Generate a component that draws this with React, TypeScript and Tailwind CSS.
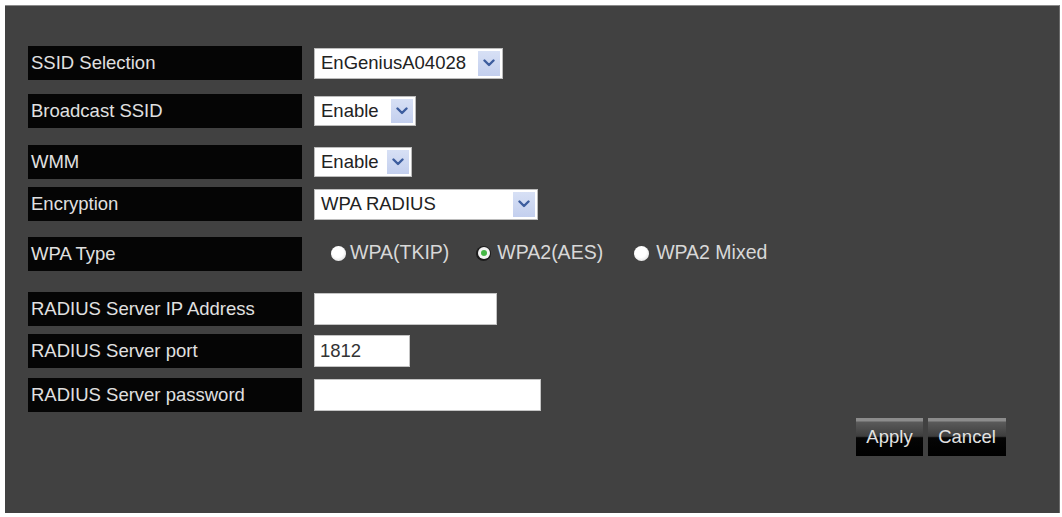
import React from "react";

const font = { fontFamily: '"Liberation Sans", Arial, sans-serif' };

function Label({ text }: { text: string }) {
  return (
    <div className="w-[274px] h-[34px] bg-[#050505] flex items-center pl-[3px] text-[18.5px] text-[#e0e0e0] leading-none shrink-0">
      {text}
    </div>
  );
}

function Arrow() {
  return (
    <div className="absolute right-[2px] top-[2px] bottom-[2px] w-[22px] bg-[linear-gradient(to_bottom,#d7e0f5,#c3cfee)] flex items-center justify-center">
      <svg width="12" height="8" viewBox="0 0 12 8">
        <path d="M1.5 1.5 L6 6 L10.5 1.5" fill="none" stroke="#3d5d9e" strokeWidth="2.4" strokeLinecap="round" strokeLinejoin="round" />
      </svg>
    </div>
  );
}

function Select({ value, w, h = 31 }: { value: string; w: string; h?: number }) {
  return (
    <div
      className={`relative ${w} bg-white border border-[#bcbcbc] flex items-center pl-[6px] text-[18.5px] text-[#222] leading-none`}
      style={{ height: h }}
    >
      {value}
      <Arrow />
    </div>
  );
}

function Input({ value, w }: { value?: string; w: string }) {
  return (
    <div className={`${w} h-[32px] bg-white border border-[#c4c4c4] flex items-center pl-[5px] text-[18.5px] text-[#333] leading-none`}>
      {value}
    </div>
  );
}

function Radio({ checked }: { checked?: boolean }) {
  if (checked) {
    return (
      <span className="w-[15px] h-[15px] rounded-full bg-[#1c1c1c] flex items-center justify-center shrink-0">
        <span className="w-[12px] h-[12px] rounded-full bg-[#f4f4f4] flex items-center justify-center">
          <span className="w-[6px] h-[6px] rounded-full bg-[#46b846]" />
        </span>
      </span>
    );
  }
  return (
    <span className="block w-[15px] h-[15px] rounded-full bg-[radial-gradient(circle_at_45%_40%,#ffffff_45%,#cfcfcf_100%)] shrink-0" />
  );
}

function Row({ label, mt, children }: { label: string; mt: string; children?: React.ReactNode }) {
  return (
    <div className={`flex items-center ${mt} ml-[23px]`}>
      <Label text={label} />
      <div className="ml-[12px] flex items-center">{children}</div>
    </div>
  );
}

function Button({ text, w }: { text: string; w: string }) {
  return (
    <div
      className={`${w} h-[38px] flex items-center justify-center text-[18.5px] text-[#e2e2e2] leading-none bg-[linear-gradient(to_bottom,#8c8c8c_0px,#8c8c8c_3px,#5a5a5a_4px,#3e3e3e_48%,#050505_52%,#000000_100%)]`}
    >
      {text}
    </div>
  );
}

export default function App() {
  return (
    <div className="w-[1062px] h-[517px] bg-white overflow-hidden pt-[5px] pl-[5px]" style={font}>
      <div className="w-[1055px] h-[508px] bg-[#414141] border-t border-t-[#8a8a8a] border-r border-r-[#6a6a6a] flex flex-col">
        <Row label="SSID Selection" mt="mt-[40px]">
          <Select value="EnGeniusA04028" w="w-[189px]" />
        </Row>
        <Row label="Broadcast SSID" mt="mt-[14px]">
          <Select value="Enable" w="w-[102px]" h={30} />
        </Row>
        <Row label="WMM" mt="mt-[17px]">
          <Select value="Enable" w="w-[98px]" h={30} />
        </Row>
        <Row label="Encryption" mt="mt-[8px]">
          <Select value="WPA RADIUS" w="w-[224px]" />
        </Row>
        <Row label="WPA Type" mt="mt-[16px]">
          <div className="flex items-center text-[19.5px] text-[#d8d8d8] leading-none -translate-y-[1px]">
            <span className="ml-[17px]"><Radio /></span>
            <span className="ml-[4px]">WPA(TKIP)</span>
            <span className="ml-[27px]"><Radio checked /></span>
            <span className="ml-[6px]">WPA2(AES)</span>
            <span className="ml-[31px]"><Radio /></span>
            <span className="ml-[7px]">WPA2 Mixed</span>
          </div>
        </Row>
        <Row label="RADIUS Server IP Address" mt="mt-[21px]">
          <Input w="w-[183px]" />
        </Row>
        <Row label="RADIUS Server port" mt="mt-[8px]">
          <Input value="1812" w="w-[96px]" />
        </Row>
        <Row label="RADIUS Server password" mt="mt-[10px]">
          <Input w="w-[227px]" />
        </Row>
        <div className="flex justify-end pr-[53px] mt-[6px] gap-[5px]">
          <Button text="Apply" w="w-[67px]" />
          <Button text="Cancel" w="w-[78px]" />
        </div>
      </div>
    </div>
  );
}
